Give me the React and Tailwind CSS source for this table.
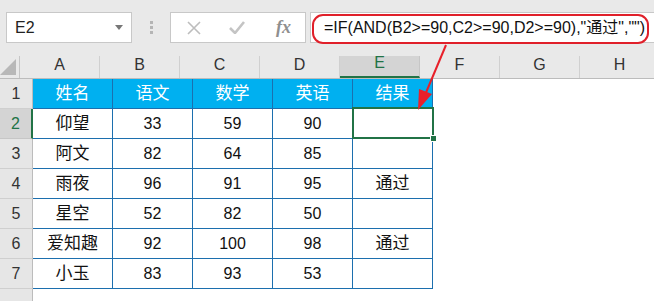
const cols = ['A', 'B', 'C', 'D', 'E', 'F', 'G', 'H'];

const rows = [
    ['姓名', '语文', '数学', '英语', '结果'],
    ['仰望', '33', '59', '90', ''],
    ['阿文', '82', '64', '85', ''],
    ['雨夜', '96', '91', '95', '通过'],
    ['星空', '52', '82', '50', ''],
    ['爱知趣', '92', '100', '98', '通过'],
    ['小玉', '83', '93', '53', ''],
];

const font = { fontFamily: '"Liberation Sans", "Noto Sans CJK SC", sans-serif' };

const FormulaBar = () => (
    <div className="h-[56px] flex items-start pt-[12px]">
        {/* Name box */}
        <div className="ml-[6px] w-[126px] h-[31px] bg-white border border-[#c8c8c8] flex items-center justify-between pl-[8px] pr-[8px]">
            <span className="text-[16px] text-[#222]">E2</span>
            <svg width="8" height="5" viewBox="0 0 8 5">
                <path d="M0 0h8L4 5z" fill="#777" />
            </svg>
        </div>

        {/* Splitter dots */}
        <div className="w-[38px] h-[31px] flex flex-col items-center justify-center gap-[2px]">
            <span className="w-[3px] h-[3px] bg-[#b5b5b5]" />
            <span className="w-[3px] h-[3px] bg-[#b5b5b5]" />
            <span className="w-[3px] h-[3px] bg-[#b5b5b5]" />
        </div>

        {/* Cancel / enter / function */}
        <div className="w-[136px] h-[31px] bg-white border border-[#c8c8c8] flex items-center">
            <svg className="ml-[16px]" width="14" height="14" viewBox="0 0 14 14">
                <path d="M1 1l12 12M13 1L1 13" stroke="#bdbdbd" strokeWidth="1.6" />
            </svg>
            <svg className="ml-[28px]" width="16" height="13" viewBox="0 0 16 13">
                <path d="M1 7l5 5L15 1" stroke="#c4c4c4" strokeWidth="2.6" fill="none" />
            </svg>
            <span
                className="ml-[31px] text-[18px] italic font-bold text-[#8f8f8f]"
                style={{ fontFamily: '"Liberation Serif", serif' }}
            >
                fx
            </span>
        </div>

        {/* Formula input */}
        <div className="ml-[4px] flex-1 h-[31px] bg-white border border-[#c8c8c8] border-r-0 relative">
            <div className="absolute left-[1px] top-[1px] w-[337px] h-[30px] rounded-[11px] border-2 border-[#e0202a]" />
            <div className="pl-[13px] h-full flex items-center text-[16px] text-[#111] whitespace-nowrap">
                =IF(AND(B2&gt;=90,C2&gt;=90,D2&gt;=90),"通过","")
            </div>
        </div>
    </div>
);

const ColumnHeaders = () => (
    <div className="flex h-[23px] border-b border-[#bcbcbc]">
        <div className="w-[33px] h-full border-r border-[#c6c6c6] flex items-end justify-end pr-[3px] pb-[3px]">
            <svg width="16" height="16" viewBox="0 0 16 16">
                <path d="M16 0V16H0z" fill="#b8b8b8" />
            </svg>
        </div>
        {cols.map((c) => (
            <div
                key={c}
                className={
                    c === 'E'
                        ? 'w-[80px] shrink-0 h-full bg-[#d4d4d4] border-r border-[#c6c6c6] border-b-2 border-b-[#217346] flex items-end justify-center pb-[1px] text-[16px] text-[#217346]'
                        : 'w-[80px] shrink-0 h-full border-r border-[#d0d0d0] flex items-end justify-center pb-[1px] text-[16px] text-[#333]'
                }
            >
                {c}
            </div>
        ))}
    </div>
);

const App = () => {
    return (
        <div className="w-[654px] h-[301px] bg-[#e9e9e9] relative overflow-hidden" style={font}>
            <FormulaBar />
            <ColumnHeaders />

            {rows.map((r, i) => (
                <div key={i} className="flex h-[30px]">
                    <div
                        className={
                            i === 1
                                ? 'w-[33px] shrink-0 bg-[#d4d4d4] border-r-2 border-[#217346] border-b border-b-[#c6c6c6] flex items-end justify-center pb-[2px] text-[16px] text-[#217346]'
                                : 'w-[33px] shrink-0 bg-[#e6e6e6] border-r border-[#bcbcbc] border-b border-b-[#cfcfcf] flex items-end justify-center pb-[2px] text-[16px] text-[#333]'
                        }
                    >
                        {i + 1}
                    </div>
                    {r.map((v, j) => (
                        <div
                            key={j}
                            className={
                                i === 0
                                    ? 'w-[80px] shrink-0 bg-[#00b0f0] border-r border-b border-[#1c6fae] flex items-center justify-center text-[17px] text-white'
                                    : /^\d*$/.test(v)
                                    ? 'w-[80px] shrink-0 bg-white border-r border-b border-[#1c6fae] flex items-center justify-center text-[16px] text-[#111]'
                                    : 'w-[80px] shrink-0 bg-white border-r border-b border-[#1c6fae] flex items-center justify-center text-[17px] text-[#111]'
                            }
                        >
                            {v}
                        </div>
                    ))}
                    <div className="flex-1 bg-white" />
                </div>
            ))}

            {/* Row 8, partly visible */}
            <div className="flex h-[30px]">
                <div className="w-[33px] shrink-0 bg-[#e6e6e6] border-r border-[#bcbcbc]" />
                <div className="flex-1 bg-white" />
            </div>

            {/* Active cell E2 with fill handle */}
            <div className="absolute left-[352px] top-[107px] w-[82px] h-[32px] border-2 border-[#217346]">
                <div className="absolute right-[-5px] bottom-[-5px] w-[7px] h-[7px] bg-[#217346] border border-white" />
            </div>

            {/* Red callout arrow */}
            <svg className="absolute left-0 top-0" width="654" height="301" viewBox="0 0 654 301">
                <path d="M446 45L425 95" stroke="#e8202a" strokeWidth="2" />
                <path d="M418 110L419 89L432 94z" fill="#e8202a" />
            </svg>
        </div>
    );
};

export default App;
